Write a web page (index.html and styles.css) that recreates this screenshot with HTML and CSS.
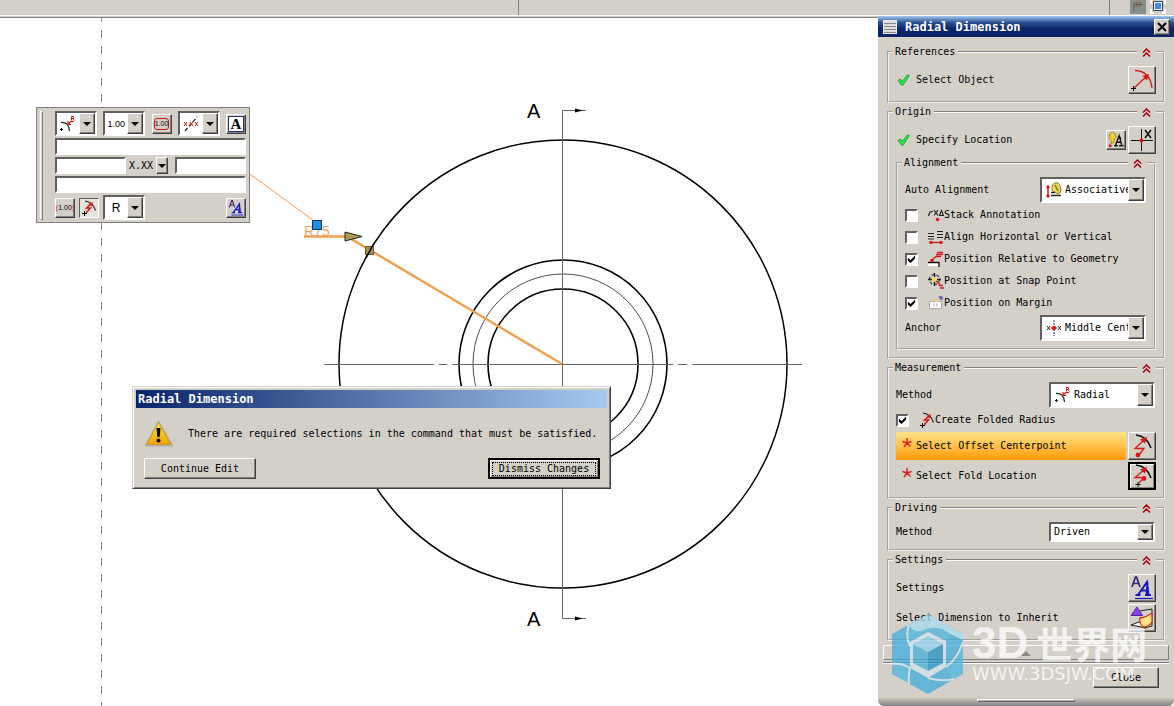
FILE: index.html
```html
<!DOCTYPE html>
<html lang="en">
<head>
<meta charset="utf-8">
<title>Radial Dimension</title>
<link rel="stylesheet" href="styles.css">
</head>
<body>
<svg class="sprite" aria-hidden="true">
  <symbol id="i-up" viewBox="0 0 9 9"><path d="M1 4.500 4.500 1 8 4.500M1 8.500 4.500 5 8 8.500" fill="none" stroke="#a80010" stroke-width="1.500"/></symbol>
  <symbol id="i-check" viewBox="0 0 14 12"><path d="M1 6.500 3.500 5 5 7.500 10.500 .800 12.500 1.500 6 11.200H4.500Z" fill="#35e050" stroke="#12a834" stroke-width=".9"/></symbol>
  <symbol id="i-star" viewBox="0 0 10 10"><path d="M5 0V5M.500 3.500 5 5 9.500 3.500M2 9 5 5 8.500 8.500" fill="none" stroke="#e01818" stroke-width="1.400"/></symbol>
  <symbol id="i-arc" viewBox="0 0 24 24"><path d="M5 2.500Q20 3 22 20M4 20 17 8" fill="none" stroke="#d81818" stroke-width="1.300"/><path d="M19 6 12.500 8 17 12.500Z" fill="#d81818"/><path d="M1 20.500h5M3.500 18v5" stroke="#000"/></symbol>
  <symbol id="i-fold-dot" viewBox="0 0 24 24"><path d="M6 1Q17 2 21 14" fill="none" stroke="#111" stroke-width="1.600"/><path d="M14 6 5 14.500H14L9 21" fill="none" stroke="#d81818" stroke-width="1.300"/><path d="M17 3 10 5.500 15 9.500Z" fill="#d81818"/><circle cx="8" cy="21" r="2.400" fill="#d81818"/></symbol>
  <symbol id="i-fold-cross" viewBox="0 0 24 24"><path d="M6 1Q17 2 21 14" fill="none" stroke="#111" stroke-width="1.600"/><path d="M14 6 5 13.500H14L9 19" fill="none" stroke="#d81818" stroke-width="1.300"/><path d="M17 3 10 5.500 15 9.500Z" fill="#d81818"/><circle cx="14" cy="14.500" r="2.400" fill="#d81818"/><path d="M5.500 20.500h5M8 18v5" stroke="#000"/></symbol>
  <symbol id="i-fold" viewBox="0 0 16 16"><path d="M4 1Q12 2 14.500 10.500" fill="none" stroke="#222" stroke-width="1.200"/><path d="M10 4 5.500 8 9.500 8 5 13" fill="none" stroke="#d81818" stroke-width="1.500"/><path d="M12 2 7.500 4 10.500 6.500Z" fill="#d81818"/><path d="M1 13.500h5M3.500 11v5" stroke="#000"/></symbol>
  <symbol id="i-radial" viewBox="0 0 16 16"><path d="M1 6.500Q9 6 9.500 15" fill="none" stroke="#222" stroke-width="1.200"/><path d="M8 5V8.500H11M8 8.500 10.500 5.500H14" fill="none" stroke="#d81818" stroke-width="1.200"/><path d="M11.500 4.500V.500H13.500V2.500H11.500M13 2.500 14.500 4.500" fill="none" stroke="#d81818"/><path d="M0 13.500h3M1.500 12v3" stroke="#000"/></symbol>
  <symbol id="i-style" viewBox="0 0 24 24"><path d="M2 11 5.500 1H6.500L10 11M3.500 7.500h5" fill="none" stroke="#352070" stroke-width="1.700"/><path d="M8 19 17 6 18.500 19M11 14.500h7M5.500 19h5M15 19h6M17.500 6.500 16.500 19" fill="none" stroke="#1717c0" stroke-width="2"/><path d="M5 22.500H23" stroke="#1717c0" stroke-width="1.300"/></symbol>
  <symbol id="i-note" viewBox="0 0 18 18"><path d="M2 2 5 0 8 2 9 6 6 10 7 12 3 13 4 10 1 7Z" fill="#f0d030" stroke="#a08010"/><path d="M7 15.500h4M12.500 15.500h5M8.500 15 12.500 4 15.500 15M9.500 11.500h5M14 5.500V12" fill="none" stroke="#111" stroke-width="1.500"/><rect x="1" y="14" width="3" height="3" fill="#d81818"/></symbol>
  <symbol id="i-locate" viewBox="0 0 24 24"><path d="M1 12.500H23M11.500 1V23" stroke="#111"/><circle cx="11.500" cy="12.500" r="2" fill="#d81818"/><path d="M15 2 21 10M21 2 15 10" stroke="#111" stroke-width="1.600"/></symbol>
  <symbol id="i-assoc" viewBox="0 0 16 16"><path d="M5 13.500h10M5 10.500h4" stroke="#222" stroke-width="1.300"/><path d="M2 5V14" stroke="#d81818" stroke-width="1.500"/><circle cx="2" cy="5" r="1.700" fill="#d81818"/><circle cx="2" cy="14" r="1.700" fill="#d81818"/><path d="M6 6Q5 3 9 1Q13 0 14 4Q16 8 14 11Q11 13 9 10Q5 9 6 6Z" fill="#e8dc70" stroke="#86790e"/><path d="M9 3 12 9" stroke="#86790e" stroke-width="1.500"/></symbol>
  <symbol id="i-stack" viewBox="0 0 16 16"><path d="M.500 9 2 5 5 4.500M6 3 10 8.500M10 3 6 8.500M11.500 8.500 13.500 3.500 15.500 8.500Z" fill="none" stroke="#222" stroke-width="1.200"/><circle cx="9.500" cy="12.500" r="1.800" fill="#d81818"/></symbol>
  <symbol id="i-align" viewBox="0 0 16 16"><path d="M0 4.500h6M0 7.500h6M0 10h6M9 2.500h6M9 5.500h6M9 8.500h6" stroke="#222" stroke-width="1.200"/><path d="M3 13.500h10" stroke="#d81818" stroke-width="1.300"/><circle cx="3" cy="13.500" r="1.700" fill="#d81818"/><circle cx="13" cy="13.500" r="1.700" fill="#d81818"/></symbol>
  <symbol id="i-rel" viewBox="0 0 16 16"><path d="M0 15V11H11V15Z" fill="#fff"/><path d="M0 11.500H11V16" fill="none" stroke="#111" stroke-width="1.300"/><path d="M3 10 8 5.500H13M9 1.500h6M8 3.500h7" fill="none" stroke="#d81818" stroke-width="1.300"/><circle cx="4" cy="9.500" r="1.800" fill="#d81818"/></symbol>
  <symbol id="i-snap" viewBox="0 0 16 16"><circle cx="6.500" cy="6.500" r="5" fill="none" stroke="#555" stroke-width="1.500" stroke-dasharray="3 2"/><path d="M6.500 0V4M6.500 9V13M0 6.500H4M9 6.500H13" stroke="#222" stroke-width="1.500"/><circle cx="6.500" cy="6.500" r="2.300" fill="#f8d830"/><path d="M8 8 12 11.500M11 12.500h4M12 15h4" stroke="#d81818" stroke-width="1.400"/></symbol>
  <symbol id="i-margin" viewBox="0 0 16 16"><path d="M1.500 6.500h12v7h-12z" fill="#fff" stroke="#aaa"/><path d="M5 6 8 3H12L13 5 9 7Z" fill="#ecc9a0"/><path d="M10 1.500 14 1 15.500 3 13 5.500Z" fill="#6b66c8"/><path d="M6 8.500v3M9 8.500v3" stroke="#aaa"/></symbol>
  <symbol id="i-anchor" viewBox="0 0 16 16"><path d="M8 0V16" stroke="#2828a0" stroke-dasharray="2 1"/><path d="M1 6 4 10M4 6 1 10M12 6 15 10M15 6 12 10" stroke="#222"/><path d="M5 8h6" stroke="#d81818"/><circle cx="8" cy="8" r="2.200" fill="#d81818"/></symbol>
  <symbol id="i-inherit" viewBox="0 0 24 24"><path d="M10 5 22 3V20L14 22" fill="none" stroke="#222"/><path d="M1 19 9 16 16 22Z" fill="#fff" stroke="#222"/><path d="M1 9.500 7 1 12.500 9.500Z" fill="#8844e8" stroke="#5520a8"/><path d="M10 12Q17 11 22 7V16Q19 21 13 21Q9 17 10 12Z" fill="#ffe680" stroke="#d03018" stroke-width="1.300"/></symbol>
  <symbol id="i-tol" viewBox="0 0 16 16"><path d="M2 15 14 1" stroke="#222" stroke-width="1.300" stroke-dasharray="4 2"/><path d="M1 6 4 10M4 6 1 10M7 6 10 10M10 6 7 10M12 6 15 10M15 6 12 10" stroke="#d81818"/></symbol>
  <symbol id="i-close" viewBox="0 0 12 12"><path d="M2 2 10 10M10 2 2 10" stroke="#000" stroke-width="2"/></symbol>
</svg>

<div class="app">
  <div class="topbar">
    <span class="topbar-left"></span>
    <span class="topbar-mid"></span>
    <span class="topbar-icons">
      <svg width="16" height="14" viewBox="0 0 16 14"><path d="M0 0H16V14H0Z" fill="#848f8e"/><path d="M3 2 7 1 13 2 13 8 8 7 4 8Z" fill="#9a8773"/><path d="M4 2v9M7 2v5M10 2v5M4 4.500h9" stroke="#5f5c58"/></svg>
      <svg width="16" height="14" viewBox="0 0 16 14"><path d="M1 4V0M15 0V4M1 9V13H4M12 13H15V9" fill="none" stroke="#fff" stroke-width="2"/><path d="M3.500 1.500h9v9h-9z" fill="#fff" stroke="#26436e"/><path d="M5 3h6v6H5z" fill="#3f8ce0"/></svg>
    </span>
  </div>

  <main class="work">
    <section class="stage">
      <svg class="drawing" width="878" height="689" viewBox="0 17 878 689">
        <path d="M101.500 14V706" stroke="#888" stroke-dasharray="8 8"/>
        <g fill="none" stroke="#000">
          <circle cx="563" cy="364" r="224" stroke-width="1.500"/>
          <circle cx="563" cy="364" r="104" stroke-width="1.600"/>
          <circle cx="563" cy="364" r="90" stroke-width=".7"/>
          <circle cx="563" cy="364" r="75" stroke-width="1.600"/>
        </g>
        <path d="M324 364.500H434M439 364.500h8M452 364.500H673M678 364.500h9M692 364.500H802M586 110.500H562.500V618.500H586" fill="none" stroke="#666"/>
        <path d="M575 108.500 583 110.500 575 112.500ZM575 616.500 583 618.500 575 620.500Z"/>
        <text class="section-mark" x="527" y="118">A</text>
        <text class="section-mark" x="527" y="626">A</text>
        <path d="M250 174 314 221" stroke="#ee9a50"/>
        <text class="radius" x="304" y="236">R75</text>
        <path d="M304 236.500H347L562 364" fill="none" stroke="#f0a050" stroke-width="2.500"/>
        <path d="M345 232V241L362 236.500Z" fill="#b09a50" stroke="#222"/>
        <path d="M365.500 246.500h8v8h-8z" fill="#a89048" stroke="#665528"/>
        <path d="M374 243 366 258" stroke="#000" stroke-width="1.500"/>
        <path d="M312.500 220.500h9v9h-9z" fill="#1890f0" stroke="#103050"/>
      </svg>

      <div class="minibar">
        <span class="grip"></span>
        <div class="minibar-rows">
          <div class="minibar-row">
            <span class="combo small"><svg class="ic"><use href="#i-radial"/></svg><button class="arrow" aria-label="Dimension type"></button></span>
            <span class="combo small"><span class="value">1.00</span><button class="arrow" aria-label="Precision"></button></span>
            <button class="tool" aria-label="Basic dimension"><span class="boxed">1.00</span></button>
            <span class="combo small"><svg class="ic"><use href="#i-tol"/></svg><button class="arrow" aria-label="Tolerance"></button></span>
            <button class="tool text-tool" aria-label="Text"><span>A</span></button>
          </div>
          <input class="field" aria-label="Text above">
          <div class="minibar-row fields">
            <input class="field" aria-label="Text before">
            <span class="format">X.XX</span><button class="arrow slim" aria-label="Format"></button>
            <input class="field" aria-label="Text after">
          </div>
          <input class="field" aria-label="Text below">
          <div class="minibar-row last">
            <button class="tool" aria-label="Reference dimension"><span class="paren">(</span><span>1.00</span><span class="paren">)</span></button>
            <button class="tool pressed" aria-label="Folded radius"><svg class="ic"><use href="#i-fold"/></svg></button>
            <span class="combo small"><span class="value big">R</span><button class="arrow" aria-label="Symbol"></button></span>
            <button class="tool push" aria-label="Settings"><svg class="ic"><use href="#i-style"/></svg></button>
          </div>
        </div>
      </div>

      <div class="dialog" role="dialog" aria-label="Radial Dimension">
        <h2 class="dialog-title">Radial Dimension</h2>
        <div class="dialog-message">
          <svg width="30" height="28" viewBox="0 0 30 28"><defs><linearGradient id="warn" x1="0" y1="0" x2="0" y2="1"><stop offset="0" stop-color="#ffe62e"/><stop offset="1" stop-color="#f2a000"/></linearGradient></defs><path d="M14.500 1 29 26H1Z" fill="#c8c4b8" stroke="#aaa" stroke-linejoin="round"/><path d="M14.500 2.500 27 24.500H2.500Z" fill="url(#warn)" stroke="#c08a00" stroke-width=".6"/><path d="M12.500 8h4l-.800 9h-2.400z"/><circle cx="14.500" cy="20.500" r="2"/></svg>
          <p>There are required selections in the command that must be satisfied.</p>
        </div>
        <div class="dialog-actions">
          <button class="btn">Continue Edit</button>
          <button class="btn default"><span>Dismiss Changes</span></button>
        </div>
      </div>
    </section>

    <aside class="panel">
      <header class="panel-head">
        <span class="menu-icon"></span>
        <h1>Radial Dimension</h1>
        <button class="close-x" aria-label="Close panel"><svg width="12" height="12"><use href="#i-close"/></svg></button>
      </header>
      <div class="groups">
        <fieldset>
          <legend>References<span class="rule"></span><button class="fold" aria-label="Collapse References"><svg><use href="#i-up"/></svg></button></legend>
          <div class="row tall"><svg class="mark"><use href="#i-check"/></svg><span class="name">Select Object</span><button class="icon-btn" aria-label="Select Object"><svg><use href="#i-arc"/></svg></button></div>
        </fieldset>

        <fieldset>
          <legend>Origin<span class="rule"></span><button class="fold" aria-label="Collapse Origin"><svg><use href="#i-up"/></svg></button></legend>
          <div class="row tall"><svg class="mark"><use href="#i-check"/></svg><span class="name">Specify Location</span><button class="tool" aria-label="Origin tool"><svg class="ic"><use href="#i-note"/></svg></button><button class="icon-btn" aria-label="Specify Location"><svg><use href="#i-locate"/></svg></button></div>
          <fieldset class="inner">
            <legend>Alignment<span class="rule"></span><button class="fold" aria-label="Collapse Alignment"><svg><use href="#i-up"/></svg></button></legend>
            <div class="row"><label for="auto">Auto Alignment</label><span class="combo"><svg class="ic"><use href="#i-assoc"/></svg><select id="auto"><option>Associative</option></select><span class="arrow"></span></span></div>
            <div class="checks">
              <label class="check"><input type="checkbox"><svg class="ic"><use href="#i-stack"/></svg>Stack Annotation</label>
              <label class="check"><input type="checkbox"><svg class="ic"><use href="#i-align"/></svg>Align Horizontal or Vertical</label>
              <label class="check"><input type="checkbox" checked><svg class="ic"><use href="#i-rel"/></svg>Position Relative to Geometry</label>
              <label class="check"><input type="checkbox"><svg class="ic"><use href="#i-snap"/></svg>Position at Snap Point</label>
              <label class="check"><input type="checkbox" checked><svg class="ic"><use href="#i-margin"/></svg>Position on Margin</label>
            </div>
            <div class="row"><label for="anchor">Anchor</label><span class="combo"><svg class="ic"><use href="#i-anchor"/></svg><select id="anchor"><option>Middle Center</option></select><span class="arrow"></span></span></div>
          </fieldset>
        </fieldset>

        <fieldset>
          <legend>Measurement<span class="rule"></span><button class="fold" aria-label="Collapse Measurement"><svg><use href="#i-up"/></svg></button></legend>
          <div class="row"><label for="method">Method</label><span class="combo"><svg class="ic"><use href="#i-radial"/></svg><select id="method"><option>Radial</option></select><span class="arrow"></span></span></div>
          <div class="checks">
            <label class="check"><input type="checkbox" checked><svg class="ic"><use href="#i-fold"/></svg>Create Folded Radius</label>
          </div>
          <div class="steps">
            <div class="row tall active"><span class="step"><svg class="star"><use href="#i-star"/></svg>Select Offset Centerpoint</span><button class="icon-btn" aria-label="Select Offset Centerpoint"><svg><use href="#i-fold-dot"/></svg></button></div>
            <div class="row tall"><span class="step"><svg class="star"><use href="#i-star"/></svg>Select Fold Location</span><button class="icon-btn focused" aria-label="Select Fold Location"><svg><use href="#i-fold-cross"/></svg></button></div>
          </div>
        </fieldset>

        <fieldset>
          <legend>Driving<span class="rule"></span><button class="fold" aria-label="Collapse Driving"><svg><use href="#i-up"/></svg></button></legend>
          <div class="row"><label for="driving">Method</label><span class="combo low"><select id="driving"><option>Driven</option></select><span class="arrow"></span></span></div>
        </fieldset>

        <fieldset>
          <legend>Settings<span class="rule"></span><button class="fold" aria-label="Collapse Settings"><svg><use href="#i-up"/></svg></button></legend>
          <div class="steps">
            <div class="row tall"><span class="name">Settings</span><button class="icon-btn" aria-label="Settings"><svg><use href="#i-style"/></svg></button></div>
            <div class="row tall"><span class="name">Select Dimension to Inherit</span><button class="icon-btn" aria-label="Select Dimension to Inherit"><svg><use href="#i-inherit"/></svg></button></div>
          </div>
        </fieldset>
      </div>
      <div class="foot">
        <button class="less" aria-label="Show less"><svg width="10" height="6" viewBox="0 0 10 6"><path d="M0 6 5 1 10 6Z" fill="#888"/></svg></button>
        <hr>
        <button class="btn close-btn">Close</button>
      </div>
      <div class="panel-edge"><span></span></div>

      <div class="watermark">
        <svg width="72" height="80" viewBox="0 0 72 80">
          <path d="M36 0 71 20V60L36 80 0 60V20Z" fill="#4ab4e0"/>
          <path d="M36 0 17 11Q22 20 32 16 46 10 58 20L71 26V20Z" fill="#a9dcef"/>
          <path d="M18 28 36 18 54 27V53L36 64 18 54Z" fill="#d4e3e8"/>
          <path d="M0 20 17 11Q14 24 18 30V54Q10 50 0 48ZM71 26Q66 42 54 53V27L58 20ZM18 54 36 64 54 53Q56 62 62 65L36 80 17 70Z" fill="#2b9fd2" opacity=".35"/>
          <path d="M17 11Q13 22 18 32M0 50Q10 49 18 54M17 70Q16 62 18 54M36 64Q50 68 62 65M54 53Q66 44 71 28" fill="none" stroke="#d4e3e8" stroke-width="2"/>
          <path d="M36 22 51 30 36 38 21 30Z" fill="#8fd0ea"/><path d="M21 30 36 38V57L21 49Z" fill="#45b2de"/><path d="M51 30 36 38V57L51 49Z" fill="#2492c6"/>
        </svg>
        <div><p class="wm-name"><span>3D</span>世界网</p><p class="wm-url">WWW.3DSJW.COM</p></div>
      </div>
    </aside>
  </main>
</div>
</body>
</html>
```
FILE: styles.css
```css
* { box-sizing: border-box; }
html, body { margin: 0; height: 100%; }
body {
  background: #fff;
  color: #000;
  font: 10px/12px "DejaVu Sans Mono", "Noto Sans CJK SC", monospace;
  overflow: hidden;
}
button, input, select { font: inherit; color: inherit; padding: 0; margin: 0; border-radius: 0; }
h1, h2, p { margin: 0; }
svg { display: block; flex: none; }
.sprite { position: absolute; width: 0; height: 0; }
.ic { width: 16px; height: 16px; }

.app { display: flex; flex-direction: column; height: 100vh; }
.topbar { display: flex; height: 16px; background: #d4d0c8; border-bottom: 1px solid #fff; }
.topbar-left { width: 519px; border-right: 1px solid #808080; }
.topbar-mid { flex: 1; border-right: 1px solid #808080; }
.topbar-icons { display: flex; gap: 4px; padding: 0 7px 0 20px; width: 64px; }
.work { display: flex; flex: 1; min-height: 0; }

/* Drawing area */
.stage {
  position: relative;
  flex: 1;
  min-width: 0;
  overflow: hidden;
  border-top: 1px solid #d4d0c8;
  box-shadow: inset 0 1px #808080;
}
.section-mark { font: 20px "Liberation Sans", sans-serif; }
.radius { font: 14px "Liberation Sans", sans-serif; fill: #f0a468; }

/* Shared controls */
.btn, .tool, .icon-btn, .arrow, .close-x {
  display: flex;
  align-items: center;
  justify-content: center;
  background: #d4d0c8;
  border: 1px solid;
  border-color: #fff #404040 #404040 #fff;
  box-shadow: inset -1px -1px #808080;
}
.btn { width: 112px; height: 21px; }
.btn.default { border: 2px solid #000; box-shadow: inset 1px 1px #fff, inset -1px -1px #808080; }
.btn.default span { border: 1px dotted #000; padding: 0 6px; }
.tool { width: 20px; height: 20px; }
.icon-btn { width: 28px; height: 28px; }
.icon-btn svg { width: 24px; height: 24px; }
.icon-btn.focused { border: 2px solid #000; box-shadow: inset 1px 1px #fff, inset -1px -1px #808080; }
.arrow { flex: none; width: 16px; align-self: stretch; }
.arrow::before { content: ""; border: 4px solid transparent; border-top-color: #000; border-bottom: 0; }
.combo {
  display: flex;
  align-items: center;
  width: 106px;
  height: 26px;
  background: #fff;
  border: 2px solid;
  border-color: #606060 #fff #fff #606060;
}
.row .combo { margin-right: 1px; }
.combo .ic { margin-left: 4px; }
.combo.low { height: 20px; }
.combo select {
  flex: 1;
  min-width: 0;
  padding-left: 3px;
  border: 0;
  background: none;
  appearance: none;
  outline: 0;
  overflow: hidden;
  text-overflow: clip;
}

/* Floating edit bar */
.minibar {
  position: absolute;
  left: 36px;
  top: 90px;
  display: flex;
  gap: 12px;
  padding: 3px 3px 2px;
  background: #d4d0c8;
  border: 1px solid #808080;
}
.grip { width: 3px; border: 1px solid; border-color: #fff #808080 #808080 #fff; }
.minibar-rows { display: flex; flex-direction: column; gap: 2px; width: 191px; }
.minibar-row { display: flex; align-items: center; justify-content: space-between; gap: 4px; }
.minibar-row.fields { gap: 0; }
.minibar-row.last { justify-content: flex-start; }
.push { margin-left: auto; }
.combo.small { width: 42px; height: 25px; font: 9px "Liberation Sans", sans-serif; }
.combo.small .ic { margin: 0 3px; }
.value { flex: 1; text-align: center; }
.value.big { font-size: 12px; }
.field {
  width: 100%;
  min-width: 0;
  height: 17px;
  border: 2px solid;
  border-color: #606060 #fff #fff #606060;
  background: #fff;
}
.fields .field { width: 71px; }
.arrow.slim { width: 12px; margin-right: 4px; }
.minibar .tool { font: 7px/10px "Liberation Sans", sans-serif; }
.boxed { border: 1px solid #d81818; border-radius: 3px; }
.paren { color: #d81818; }
.minibar .text-tool { font: bold 15px/14px "Liberation Serif", serif; }
.text-tool span { width: 16px; height: 16px; border: 1px solid #303070; background: #fff; }
.pressed { border-color: #606060 #fff #fff #606060; box-shadow: none; background: #e6e3dd; }

/* Alert */
.dialog {
  position: absolute;
  left: 132px;
  top: 369px;
  width: 479px;
  padding: 3px;
  background: #d4d0c8;
  border: 1px solid;
  border-color: #d4d0c8 #404040 #404040 #d4d0c8;
  box-shadow: inset 1px 1px #fff, inset -1px -1px #808080;
}
.dialog-title {
  padding: 3px 2px;
  color: #fff;
  font-size: 12px;
  line-height: 12px;
  background: linear-gradient(90deg, #0a246a, #a6caf0);
}
.dialog-message { display: flex; align-items: center; gap: 14px; padding: 12px 8px 10px; }
.dialog-actions { display: flex; justify-content: space-between; padding: 0 7px 6px 8px; }

/* Side panel */
.panel {
  position: relative;
  display: flex;
  flex-direction: column;
  width: 296px;
  background: #d4d0c8;
  border-radius: 0 0 6px 6px;
}
.panel-head {
  display: flex;
  align-items: center;
  gap: 8px;
  height: 21px;
  padding: 0 4px 0 5px;
  color: #fff;
  background: linear-gradient(#a6caf0, #2f5596 30%, #0a246a 60%);
}
.panel-head h1 { flex: 1; font-size: 12px; line-height: 16px; }
.menu-icon { width: 14px; height: 14px; border: 1px solid #eee; background: repeating-linear-gradient(#ddd 0 2px, #888 2px 3px); }
.close-x { width: 16px; height: 16px; }

.groups { display: flex; flex-direction: column; gap: 3px; padding: 9px 9px 0; }
fieldset { margin: 0; min-width: 0; padding: 8px 7px 7px; border: 2px groove #f4f2ee; }
legend { display: flex; align-items: center; width: calc(100% + 3px); height: 12px; margin-left: -3px; padding-left: 2px; }
.rule { flex: 1; height: 2px; margin: 0 5px 0 3px; background: #808080; border-bottom: 1px solid #fff; }
.fold { width: 9px; height: 10px; margin-right: 3px; border: 0; background: none; }
.fold svg { width: 9px; height: 9px; }
.row { display: flex; align-items: center; justify-content: space-between; gap: 2px; }
.tall { height: 28px; }
.mark { width: 14px; height: 12px; margin: 0 3px 0 1px; }
.name { flex: 1; }
.inner { margin-top: 3px; }

.checks { padding: 1px 0; }
.check { display: flex; align-items: center; height: 22px; }
.check input {
  position: relative;
  appearance: none;
  width: 13px;
  height: 13px;
  margin-right: 10px;
  background: #fff;
  border: 2px solid;
  border-color: #606060 #fff #fff #606060;
}
.check input:checked::before {
  content: "";
  position: absolute;
  inset: 0;
  background: #000;
  clip-path: polygon(10% 35%, 40% 60%, 90% 10%, 90% 45%, 40% 95%, 10% 70%);
}

.steps { display: flex; flex-direction: column; gap: 2px; }
.step { flex: 1; display: flex; align-items: center; gap: 4px; align-self: stretch; padding-left: 6px; }
.star { width: 10px; height: 10px; margin-bottom: 6px; }
.active .step { background: linear-gradient(#ffe68a, #ff9a08); }

.foot { display: flex; flex-direction: column; padding: 4px 5px 0; }
.less {
  display: flex;
  align-items: center;
  justify-content: center;
  height: 15px;
  background: #d4d0c8;
  border: 1px solid;
  border-color: #fff #808080 #808080 #fff;
}
hr { width: 100%; height: 2px; margin: 2px 0 3px; border: 0; border-top: 1px solid #808080; border-bottom: 1px solid #fff; }
.close-btn { width: 66px; align-self: flex-end; margin-right: 10px; }
.panel-edge {
  display: flex;
  justify-content: center;
  height: 9px;
  margin-top: auto;
  padding-top: 2px;
  border-radius: 0 0 6px 6px;
  background: linear-gradient(#d4d0c8, #808080);
}
.panel-edge span { width: 98px; height: 3px; border: 1px solid; border-color: #fff #666 #666 #fff; }

/* Site mark laid over the lower part of the panel */
.watermark {
  position: absolute;
  left: 14px;
  bottom: 12px;
  display: flex;
  gap: 8px;
  color: #fff;
  opacity: .75;
  pointer-events: none;
}
.wm-name { display: flex; align-items: center; gap: 8px; margin-top: 6px; font: bold 37px/46px "Noto Sans CJK SC", sans-serif; white-space: nowrap; }
.wm-name span { font: bold 44px/46px "Liberation Sans", sans-serif; }
.wm-url { font: 18px/16px "DejaVu Sans", sans-serif; }
```
